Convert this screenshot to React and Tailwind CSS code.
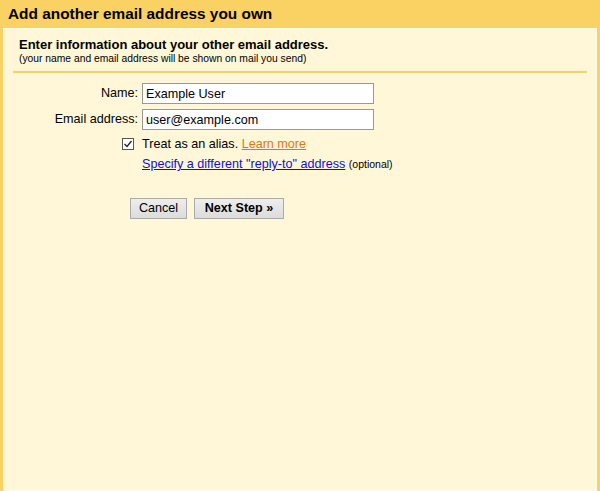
export default function App() {
  return (
    <div className="h-[491px] w-[600px] bg-[#fad163] font-['Liberation_Sans',Arial,sans-serif] text-black flex flex-col">
      <div className="h-[28px] px-[8px] flex items-center text-[15.4px] font-bold leading-none">
        Add another email address you own
      </div>
      <div className="flex-1 mx-[3px] mb-0 bg-[#fff7d7] border border-[#fffbea] px-[15px] pt-[8px]">
        <div className="text-[13px] font-bold leading-[15px]">Enter information about your other email address.</div>
        <div className="text-[10.3px] leading-[11px] mt-[1px]">(your name and email address will be shown on mail you send)</div>
        <div className="h-[2px] bg-[#f5d36a] mt-[7px] -mx-[6px]" />
        <div className="mt-[10px] grid grid-cols-[119px_1fr] gap-x-[4px] gap-y-[5px] items-center text-[12.6px]">
          <div className="text-right">Name:</div>
          <input
            defaultValue="Example User"
            className="w-[232px] h-[21px] border border-[#999] bg-white px-[3px] text-[12.6px] outline-none"
          />
          <div className="text-right">Email address:</div>
          <input
            defaultValue="user@example.com"
            className="w-[232px] h-[21px] border border-[#999] bg-white px-[3px] text-[12.6px] outline-none"
          />
        </div>
        <div className="mt-[6px] ml-[103px] h-[16px] flex items-center gap-[8px] text-[12.6px]">
          <span className="w-[12px] h-[12px] border border-[#555] bg-white flex items-center justify-center">
            <svg width="10" height="10" viewBox="0 0 10 10">
              <path d="M1.5 5 L4 7.5 L8.5 2" fill="none" stroke="#222" strokeWidth="1.3" />
            </svg>
          </span>
          <span>
            Treat as an alias. <a className="text-[#e5731d] underline" href="#">Learn more</a>
          </span>
        </div>
        <div className="mt-[4px] ml-[123px] h-[16px] leading-[16px] text-[12.6px]">
          <a className="text-[#1111cc] underline" href="#">Specify a different "reply-to" address</a>{' '}
          <span className="text-[10.5px]">(optional)</span>
        </div>
        <div className="mt-[26px] ml-[111px] flex gap-[7px] text-[12.6px]">
          <button className="h-[21px] w-[57px] border border-[#aaa] bg-gradient-to-b from-[#eeeeee] to-[#dcdcdc]">Cancel</button>
          <button className="h-[21px] w-[90px] border border-[#aaa] bg-gradient-to-b from-[#eeeeee] to-[#dcdcdc] font-bold">Next Step »</button>
        </div>
      </div>
    </div>
  );
}
